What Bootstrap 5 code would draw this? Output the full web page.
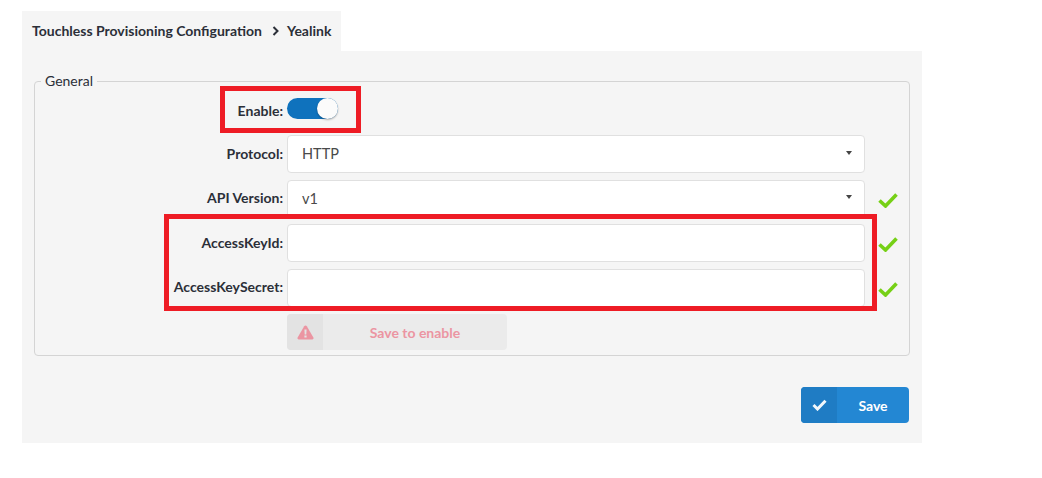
<!DOCTYPE html>
<html lang="en">
<head>
  <meta charset="UTF-8">
  <meta name="viewport" content="width=device-width, initial-scale=1.0">
  <title>Touchless Provisioning Configuration</title>
  <link href="https://cdn.jsdelivr.net/npm/bootstrap@5.3.0/dist/css/bootstrap.min.css" rel="stylesheet">
  <style>
    body { font-family: Lato, "Liberation Sans", sans-serif; font-size: 14px; color: #2b2f38; background: #fff; }
    .page-wrap { width: 900px; margin: 11px 0 0 22px; position: relative; }
    .crumb-tab { width: 319px; height: 40px; background: #f5f5f5; padding: 0 0 2px 10px; font-weight: 700; font-size: 14px; }
    .crumb-sep { width: 7px; height: 10px; margin: 2px 8px 0 10px; }
    .panel-body { background: #f5f5f5; height: 392px; padding: 30px 12px 0; }
    .group-box { height: 275px; border: 1px solid #d4d4d4; border-radius: 4px; position: relative; padding-top: 13px; }
    .group-title { position: absolute; left: 6px; top: -9px; padding: 0 4px; background: #f5f5f5; font-size: 14px; line-height: 16px; }
    .form-line { display: flex; align-items: center; }
    .line-toggle { height: 32px; margin-bottom: 8px; }
    .line-input { height: 38px; margin-bottom: 6.5px; }
    .line-label { width: 252px; padding: 0 4px 2px 0; text-align: right; font-weight: 700; font-size: 14px; flex: none; }
    .line-field { width: 578px; height: 100%; background: #fff; border: 1px solid #e0e0e0; border-radius: 4px; padding-left: 14px; display: flex; align-items: center; justify-content: space-between; font-size: 14.5px; color: #4a4a4a; }
    .caret-mark { width: 0; height: 0; margin-right: 12px; margin-bottom: 3px; border-left: 3.5px solid transparent; border-right: 3.5px solid transparent; border-top: 4px solid #444; }
    .ok-mark { width: 20px; height: 16px; margin: 2px 0 0 13px; flex: none; }
    .toggle-track { width: 51px; height: 21px; background: #0f72bd; border-radius: 11px; position: relative; margin-top: -5px; }
    .toggle-knob { position: absolute; right: 0; top: 0; width: 21px; height: 21px; background: #fbfbfb; border-radius: 50%; box-shadow: 0 1px 2px rgba(0,0,0,.3); }
    .btn-pair { display: flex; padding: 0; border: 0; border-radius: 4px; overflow: hidden; font-weight: 700; font-size: 14px; }
    .disabled-pair { width: 220px; height: 36px; margin-left: 252px; margin-top: 7.5px; background: #ebebeb; color: #eb95a2; }
    .disabled-pair .pair-icon { width: 36px; background: #e3e3e3; }
    .save-pair { width: 108px; height: 36px; background: #2387d3; color: #fff; margin: 31px 0 0 767px; }
    .save-pair .pair-icon { width: 36px; background: #1f7cc4; }
    .pair-icon { height: 100%; display: flex; align-items: center; justify-content: center; flex: none; }
    .pair-text { flex: 1; align-self: center; text-align: center; }
    .note-box { position: absolute; border: 5px solid #ee1c25; pointer-events: none; }
    .note-enable { left: 198px; top: 75px; width: 141px; height: 47px; }
    .note-keys { left: 142px; top: 203px; width: 713px; height: 97px; }
  </style>
</head>
<body>
<div class="page-wrap">
  <div class="crumb-tab d-flex align-items-center">
    <span>Touchless Provisioning Configuration</span>
    <svg class="crumb-sep" viewBox="0 0 7 10"><path d="M1.500 1 5.500 5 1.500 9" fill="none" stroke="#2b2f38" stroke-width="2"/></svg>
    <span>Yealink</span>
  </div>
  <div class="panel-body">
    <div class="group-box">
      <div class="group-title">General</div>
      <div class="form-line line-toggle">
        <div class="line-label">Enable:</div>
        <div class="toggle-track"><div class="toggle-knob"></div></div>
      </div>
      <div class="form-line line-input">
        <div class="line-label">Protocol:</div>
        <div class="line-field">HTTP<span class="caret-mark"></span></div>
      </div>
      <div class="form-line line-input">
        <div class="line-label">API Version:</div>
        <div class="line-field">v1<span class="caret-mark"></span></div>
        <svg class="ok-mark" viewBox="0 0 20 16"><path d="M1.500 8.500 7.500 14 18.500 2.500" fill="none" stroke="#76d016" stroke-width="3.600"/></svg>
      </div>
      <div class="form-line line-input">
        <div class="line-label">AccessKeyId:</div>
        <div class="line-field"></div>
        <svg class="ok-mark" viewBox="0 0 20 16"><path d="M1.500 8.500 7.500 14 18.500 2.500" fill="none" stroke="#76d016" stroke-width="3.600"/></svg>
      </div>
      <div class="form-line line-input">
        <div class="line-label">AccessKeySecret:</div>
        <div class="line-field"></div>
        <svg class="ok-mark" viewBox="0 0 20 16"><path d="M1.500 8.500 7.500 14 18.500 2.500" fill="none" stroke="#76d016" stroke-width="3.600"/></svg>
      </div>
      <button type="button" class="btn-pair disabled-pair">
        <span class="pair-icon">
          <svg width="17" height="15" viewBox="0 0 17 15"><path d="M8.500.5c.6 0 1 .3 1.300.8l6.600 11.300c.5.900-.1 2-1.200 2H1.800c-1.100 0-1.700-1.100-1.200-2L7.200 1.300C7.500.8 7.900.5 8.500.5Z" fill="#eb95a2"/><path d="M7.400 4.500h2.200l-.3 5H7.700ZM7.400 10.600h2.200v2H7.400Z" fill="#e3e3e3"/></svg>
        </span>
        <span class="pair-text">Save to enable</span>
      </button>
    </div>
    <button type="button" class="btn-pair save-pair">
      <span class="pair-icon">
        <svg width="15" height="12" viewBox="0 0 15 12"><path d="M1.500 6 5.500 10 13.500 1.800" fill="none" stroke="#f2f7fb" stroke-width="3"/></svg>
      </span>
      <span class="pair-text">Save</span>
    </button>
  </div>
  <div class="note-box note-enable"></div>
  <div class="note-box note-keys"></div>
</div>
<script src="https://cdn.jsdelivr.net/npm/bootstrap@5.3.0/dist/js/bootstrap.bundle.min.js"></script>
</body>
</html>
